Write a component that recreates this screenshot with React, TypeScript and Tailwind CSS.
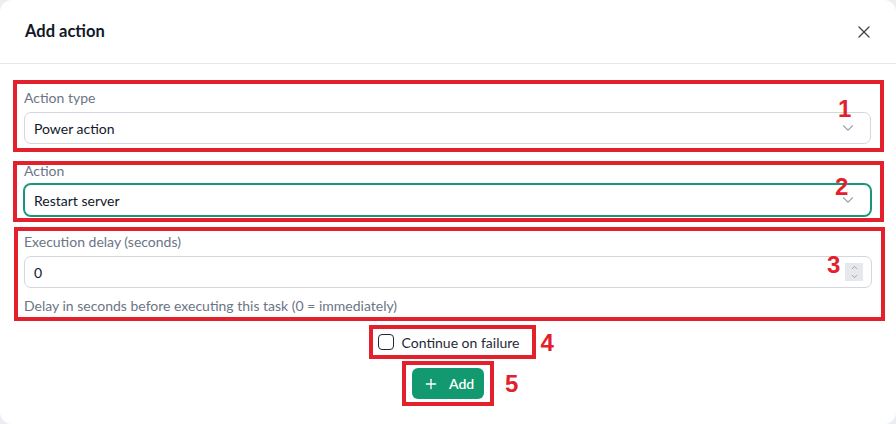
import { ChevronDown, ChevronUp, Plus, X } from "lucide-react";

const font = { fontFamily: "Lato, 'Noto Sans', sans-serif" };

function Mark({ n, className }: { n: string; className: string }) {
  return (
    <span
      className={`absolute text-[24px] leading-none font-bold text-[#e3212d] ${className}`}
      style={{ fontFamily: "'Liberation Sans', Arial, sans-serif" }}
    >
      {n}
    </span>
  );
}

function SelectBox({ value, active }: { value: string; active?: boolean }) {
  return (
    <div
      className={`flex h-[32px] items-center justify-between rounded-[7px] border bg-white pl-[9px] pr-[13px] text-[14px] text-[#111827] ${
        active ? "border-[#16967a] ring-1 ring-[#16967a]" : "border-[#d3d8e0]"
      }`}
    >
      <span>{value}</span>
      <ChevronDown size={18} strokeWidth={1.5} className="text-[#9aa3b2]" />
    </div>
  );
}

export default function App() {
  return (
    <div className="h-[424px] w-[896px] bg-[#eceef1]" style={font}>
      <div className="flex h-full flex-col rounded-xl bg-white">
        {/* header */}
        <div className="flex h-[64px] shrink-0 items-center justify-between border-b border-[#e5e7eb] pl-[25px] pr-[22px]">
          <h2 className="text-[16.5px] font-bold text-[#111827]">Add action</h2>
          <X size={20} strokeWidth={1.5} className="text-[#374151]" />
        </div>

        <div className="flex flex-col pt-[16px]">
          {/* 1 */}
          <div className="relative ml-[13px] mr-[12px] border-4 border-[#e3212d] pb-[4px] pl-[7px] pr-[9px] pt-[6px]">
            <div className="text-[14px] leading-[16px] text-[#6b7585]">Action type</div>
            <div className="mt-[6px]">
              <SelectBox value="Power action" />
            </div>
            <Mark n="1" className="left-[821px] top-[13px]" />
          </div>

          {/* 2 */}
          <div className="relative ml-[13px] mr-[12px] mt-[9px] border-4 border-[#e3212d] pb-[2px] pl-[7px] pr-[9px]">
            <div className="-mt-[2px] text-[14px] leading-[16px] text-[#6b7585]">Action</div>
            <div className="mt-[5px]">
              <SelectBox value="Restart server" active />
            </div>
            <Mark n="2" className="left-[818px] top-[10px]" />
          </div>

          {/* 3 */}
          <div className="relative ml-[14px] mr-[11px] mt-[5px] border-4 border-[#e3212d] pb-[3px] pl-[6px] pr-[9px] pt-[3px]">
            <div className="text-[14px] leading-[16px] text-[#6b7585]">Execution delay (seconds)</div>
            <div className="mt-[6px] flex h-[32px] items-center justify-between rounded-[7px] border border-[#d3d8e0] pl-[9px] pr-[8px] text-[14px] text-[#111827]">
              <span>0</span>
              <div className="flex h-[18px] w-[18px] flex-col items-center justify-center bg-[#e6e8ec] text-[#8a919c]">
                <ChevronUp size={9} strokeWidth={2} />
                <ChevronDown size={9} strokeWidth={2} />
              </div>
            </div>
            <div className="mt-[10px] text-[14px] leading-[16px] text-[#6b7585]">
              Delay in seconds before executing this task (0 = immediately)
            </div>
            <Mark n="3" className="left-[809px] top-[22px]" />
          </div>

          {/* 4 */}
          <div className="mt-[4px] flex justify-center pl-[9px]">
            <div className="relative flex h-[34px] items-center gap-[8px] border-4 border-[#e3212d] pl-[5px] pr-[13px]">
              <span className="h-[16px] w-[16px] rounded-[4px] border-[1.5px] border-[#1f2937] bg-white" />
              <span className="text-[14px] text-[#1f2937]">Continue on failure</span>
              <Mark n="4" className="left-[calc(100%+8px)] top-[2px]" />
            </div>
          </div>

          {/* 5 */}
          <div className="mt-[2px] flex justify-center">
            <div className="relative border-4 border-[#e3212d] px-[6px] py-[3px]">
              <button className="flex h-[31px] w-[72px] items-center gap-[10px] rounded-[6px] bg-[#12996f] pl-[11px] text-[14px] font-semibold text-white">
                <Plus size={16} strokeWidth={2} />
                <span>Add</span>
              </button>
              <Mark n="5" className="left-[calc(100%+15px)] top-[7px]" />
            </div>
          </div>
        </div>
      </div>
    </div>
  );
}
